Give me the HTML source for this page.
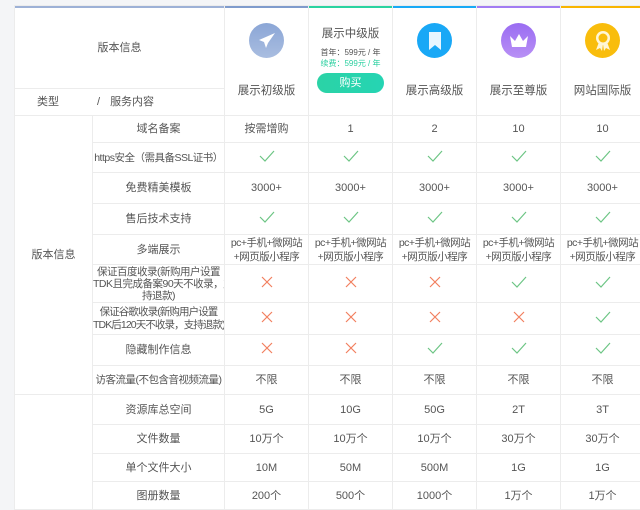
<!DOCTYPE html>
<html><head><meta charset="utf-8"><style>
body{margin:0;width:640px;height:501px;overflow:hidden;background:#f4f5f7;font-family:"Liberation Sans","Noto Sans CJK SC",sans-serif;color:#555;}
table{position:absolute;left:14px;top:5px;border-collapse:collapse;table-layout:fixed;width:630px;background:#fff;font-size:11px;}
td{border:1px solid #ececec;text-align:center;padding:0;line-height:14px;white-space:nowrap;overflow:hidden;}
.hd td{vertical-align:top;position:relative;height:109px;}
.bar{position:absolute;left:0;right:0;top:-1px;height:3px;}
.ic{width:35px;height:35px;border-radius:50%;margin:17px auto 0;display:flex;align-items:center;justify-content:center;}
.nm{position:absolute;left:0;right:0;top:78px;font-size:11.5px;color:#555;}
.ck{display:inline-block;width:16px;height:12px;}
.sm{font-size:10.5px;letter-spacing:-0.5px;}
</style></head><body>
<table>
<colgroup><col style="width:78px"><col style="width:132px"><col style="width:84px"><col style="width:84px"><col style="width:84px"><col style="width:84px"><col style="width:84px"></colgroup>
<tr class="hd">
<td colspan="2" style="padding:0"><div class="bar" style="background:#9db1d6"></div>
<div style="height:80px;line-height:80px;border-bottom:1px solid #ececec;margin-top:2px">版本信息</div>
<div style="text-align:left;padding-left:22px;line-height:26px">类型<span style="margin-left:38px">/</span><span style="margin-left:10px">服务内容</span></div></td>
<td><div class="bar" style="background:#7f9bcc"></div><div class="ic" style="background:linear-gradient(#8ba6d6,#a9bde0)"><svg width="20" height="20" viewBox="0 0 20 20"><path d="M18 2 L2 9 L7 11 L9 17 L11 12 Z" fill="#fff"/></svg></div><div class="nm">展示初级版</div></td>
<td><div class="bar" style="background:#2ad3a0"></div><div style="margin-top:21px;font-size:11.5px">展示中级版</div><div style="font-size:8px;margin-top:6px;line-height:11px">首年：599元 / 年</div><div style="font-size:8px;color:#2bd0a0;line-height:11px">续费：599元 / 年</div><div style="margin:4px auto 0;width:67px;height:20px;border-radius:10px;background:linear-gradient(90deg,#2bd3a6,#25d4b3);color:#fff;line-height:20px;font-size:11px">购买</div></td>
<td><div class="bar" style="background:#18a9f6"></div><div class="ic" style="background:#19a8f6"><svg width="16" height="20" viewBox="0 0 16 20"><path d="M2 1 H14 V19 L8 14 L2 19 Z" fill="#e8f6ff"/></svg></div><div class="nm">展示高级版</div></td>
<td><div class="bar" style="background:#a27cf2"></div><div class="ic" style="background:linear-gradient(#9a6cf2,#b890f5)"><svg width="20" height="16" viewBox="0 0 20 16"><path d="M1 3 L6 8 L10 1 L14 8 L19 3 L17 14 H3 Z" fill="#fff"/></svg></div><div class="nm">展示至尊版</div></td>
<td><div class="bar" style="background:#f8b500"></div><div class="ic" style="background:#f9bd0c"><svg width="18" height="22" viewBox="0 0 18 22"><path d="M5 12 L2 20 L6 18 L8 21 L9 14 L10 21 L12 18 L16 20 L13 12" fill="#fff6d6"/><circle cx="9" cy="8" r="7" fill="#fff6d6"/><circle cx="9" cy="8" r="4.5" fill="#f9bd0c"/></svg></div><div class="nm">网站国际版</div></td>
</tr>
<tr style="height:27px"><td rowspan="9">版本信息</td><td>域名备案</td><td>按需增购</td><td>1</td><td>2</td><td>10</td><td>10</td></tr>
<tr style="height:30px"><td class="sm">https安全（需具备SSL证书）</td><td>Y</td><td>Y</td><td>Y</td><td>Y</td><td>Y</td></tr>
<tr style="height:31px"><td>免费精美模板</td><td>3000+</td><td>3000+</td><td>3000+</td><td>3000+</td><td>3000+</td></tr>
<tr style="height:31px"><td>售后技术支持</td><td>Y</td><td>Y</td><td>Y</td><td>Y</td><td>Y</td></tr>
<tr style="height:30px"><td>多端展示</td><td class="sm">pc+手机+微网站<br>+网页版小程序</td><td class="sm">pc+手机+微网站<br>+网页版小程序</td><td class="sm">pc+手机+微网站<br>+网页版小程序</td><td class="sm">pc+手机+微网站<br>+网页版小程序</td><td class="sm">pc+手机+微网站<br>+网页版小程序</td></tr>
<tr style="height:38px"><td class="sm" style="line-height:12px">保证百度收录(新购用户设置<br>TDK且完成备案90天不收录，支<br>持退款)</td><td>X</td><td>X</td><td>X</td><td>Y</td><td>Y</td></tr>
<tr style="height:32px"><td class="sm" style="line-height:13px;letter-spacing:-0.9px">保证谷歌收录(新购用户设置<br>TDK后120天不收录，支持退款)</td><td>X</td><td>X</td><td>X</td><td>X</td><td>Y</td></tr>
<tr style="height:31px"><td>隐藏制作信息</td><td>X</td><td>X</td><td>Y</td><td>Y</td><td>Y</td></tr>
<tr style="height:29px"><td class="sm">访客流量(不包含音视频流量)</td><td>不限</td><td>不限</td><td>不限</td><td>不限</td><td>不限</td></tr>
<tr style="height:30px"><td rowspan="4"></td><td>资源库总空间</td><td>5G</td><td>10G</td><td>50G</td><td>2T</td><td>3T</td></tr>
<tr style="height:29px"><td>文件数量</td><td>10万个</td><td>10万个</td><td>10万个</td><td>30万个</td><td>30万个</td></tr>
<tr style="height:28px"><td>单个文件大小</td><td>10M</td><td>50M</td><td>500M</td><td>1G</td><td>1G</td></tr>
<tr style="height:28px"><td>图册数量</td><td>200个</td><td>500个</td><td>1000个</td><td>1万个</td><td>1万个</td></tr>
</table>
<script>
document.querySelectorAll('td').forEach(function(t){
 if(t.textContent==='Y')t.innerHTML='<svg class="ck" viewBox="0 0 16 12"><path d="M1 6 L6 11 L15 1" fill="none" stroke="#6cc584" stroke-width="1.2"/></svg>';
 else if(t.textContent==='X')t.innerHTML='<svg class="ck" viewBox="0 0 16 12"><path d="M3 1 L13 11 M13 1 L3 11" fill="none" stroke="#f2805f" stroke-width="1.2"/></svg>';
});
</script>
</body></html>
